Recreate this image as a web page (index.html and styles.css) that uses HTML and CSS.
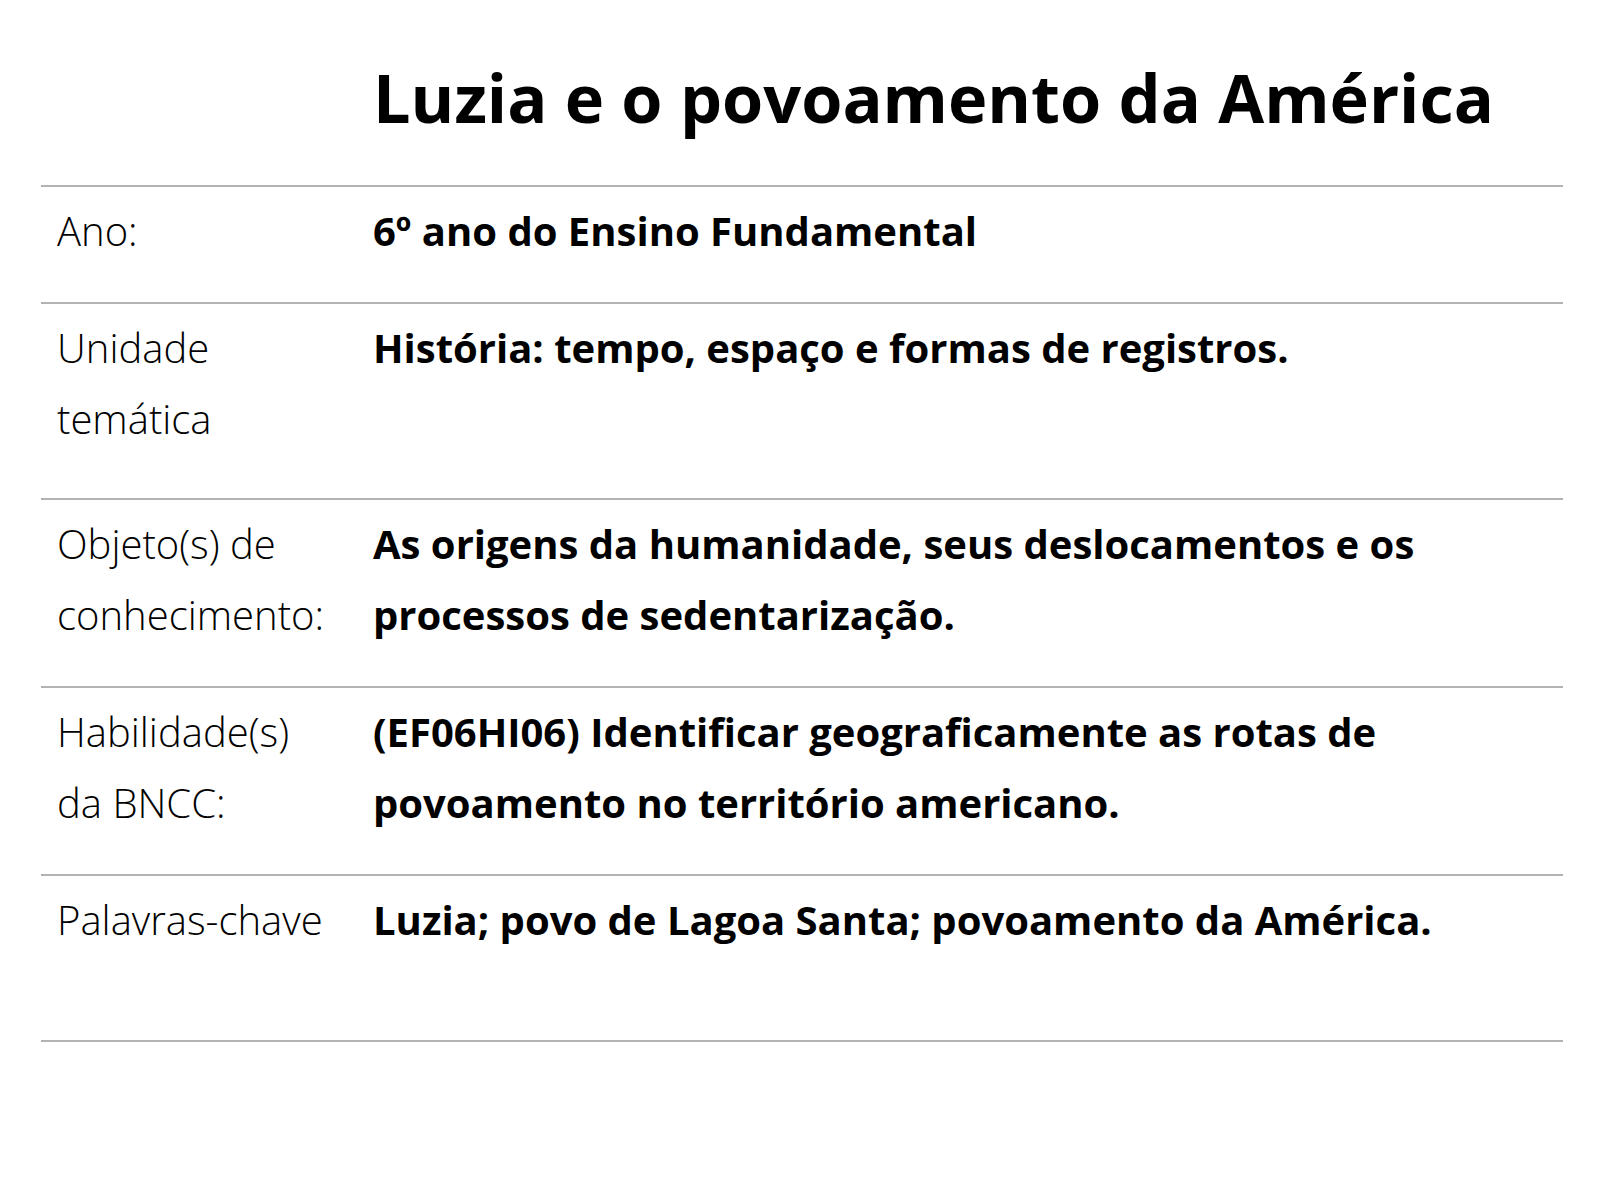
FILE: index.html
```html
<!DOCTYPE html>
<html lang="pt-BR">
<head>
<meta charset="utf-8">
<title>Luzia e o povoamento da América</title>
<link rel="stylesheet" href="styles.css">
</head>
<body>
<div class="page">
  <h1 class="title">Luzia e o povoamento da América</h1>
  <div class="table">
    <div class="row">
      <div class="label">Ano:</div>
      <div class="value">6º ano do Ensino Fundamental</div>
    </div>
    <div class="row row-tall">
      <div class="label">Unidade<br>temática</div>
      <div class="value">História: tempo, espaço e formas de registros.</div>
    </div>
    <div class="row">
      <div class="label">Objeto(s) de<br>conhecimento:</div>
      <div class="value">As origens da humanidade, seus deslocamentos e os<br>processos de sedentarização.</div>
    </div>
    <div class="row">
      <div class="label">Habilidade(s)<br>da BNCC:</div>
      <div class="value">(EF06HI06) Identificar geograficamente as rotas de<br>povoamento no território americano.</div>
    </div>
    <div class="row row-last">
      <div class="label">Palavras-chave</div>
      <div class="value">Luzia; povo de Lagoa Santa; povoamento da América.</div>
    </div>
  </div>
</div>
</body>
</html>
```
FILE: styles.css
```css
html, body {
  margin: 0;
  padding: 0;
  background: #ffffff;
}
body {
  font-family: "Open Sans", "Liberation Sans", sans-serif;
  color: #000000;
  width: 1600px;
  height: 1200px;
  overflow: hidden;
}
.page {
  padding: 0 37px 0 41px;
}
.title {
  margin: 0;
  padding: 56px 0 0 332px;
  height: 185px;
  box-sizing: border-box;
  font-size: 66.6px;
  line-height: 84px;
  font-weight: 700;
  white-space: nowrap;
}
.table {
  border-top: 2px solid #b3b3b3;
}
.row {
  display: grid;
  grid-template-columns: 316px 1fr;
  padding: 8px 0 36px 16px;
  border-bottom: 2px solid #b3b3b3;
  font-size: 40px;
  line-height: 71px;
}
.row-tall {
  padding-bottom: 44px;
}
.row-last {
  padding-bottom: 85px;
}
.label {
  font-weight: 300;
}
.value {
  font-weight: 700;
}
```
